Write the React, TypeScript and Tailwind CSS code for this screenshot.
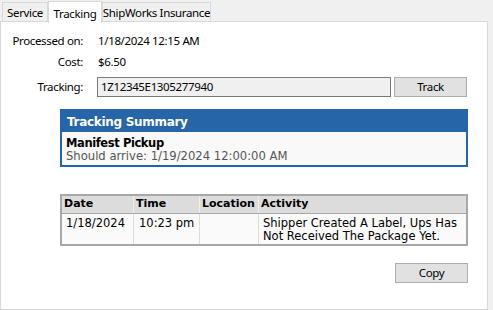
const ui = "font-['Segoe_UI','Noto_Sans',sans-serif] tracking-[-0.35px]";
const verdana = "font-['Verdana','DejaVu_Sans',sans-serif] tracking-normal";

const Tab = ({ label, active, w }: { label: string; active?: boolean; w: string }) => (
  <div
    className={
      active
        ? `${w} h-[22px] bg-white border border-[#d9d9d9] border-b-0 -mb-px z-10 flex items-start justify-center pt-[3px] whitespace-nowrap`
        : `${w} h-[20px] bg-[#f0f0f0] border border-[#d9d9d9] border-b-0 flex items-center justify-center pt-[1px] whitespace-nowrap`
    }
  >
    {label}
  </div>
);

const Button = ({ label }: { label: string }) => (
  <button className="w-[73px] h-[20px] bg-[#e1e1e1] border border-[#adadad] text-[11.5px] text-black leading-none">
    {label}
  </button>
);

export default function App() {
  return (
    <div className={`${ui} text-[11.5px] w-[493px] h-[310px] bg-[#f0f0f0] overflow-hidden text-black`}>
      <div className="flex items-end h-[22px] pl-[2px]">
        <Tab label="Service" w="w-[46px]" />
        <Tab label="Tracking" active w="w-[54px]" />
        <Tab label="ShipWorks Insurance" w="w-[109px]" />
      </div>

      <div className="relative w-[488px] h-[289px] bg-white border border-[#d9d9d9] -mt-px">
        <div className="flex items-center h-[20px] mt-[9px]">
          <div className="w-[82px] text-right">Processed on:</div>
          <div className="ml-[15px]">1/18/2024 12:15 AM</div>
        </div>
        <div className="flex items-center h-[20px] mt-[1px]">
          <div className="w-[82px] text-right">Cost:</div>
          <div className="ml-[15px]">$6.50</div>
        </div>
        <div className="flex items-center h-[20px] mt-[5px]">
          <div className="w-[82px] text-right">Tracking:</div>
          <div className="ml-[14px] w-[294px] h-[20px] bg-[#f0f0f0] border border-[#7a7a7a] flex items-center pl-[3px]">
            1Z12345E1305277940
          </div>
          <div className="ml-[3px]">
            <Button label="Track" />
          </div>
        </div>

        <div className={`${verdana} ml-[59px] mt-[12px] w-[408px] border-2 border-[#2565a8]`}>
          <div className="h-[21px] bg-[#2565a8] text-white font-bold text-[12px] tracking-[-0.3px] flex items-center pl-[5px]">
            Tracking Summary
          </div>
          <div className="bg-[#f9f9f9] pl-[4px] pt-[5px] pb-[2px]">
            <div className="font-bold text-[11.5px] tracking-[-0.4px] leading-[13px]">Manifest Pickup</div>
            <div className="text-[11.6px] leading-[13px] text-[#555555]">Should arrive: 1/19/2024 12:00:00 AM</div>
          </div>
        </div>

        <div className={`${verdana} text-[11.5px] ml-[59px] mt-[27px] w-[408px] border-2 border-[#a8a8a8] bg-[#fafafa]`}>
          <div className="grid grid-cols-[71px_66px_59px_1fr] bg-[#dcdcdc] font-bold text-[11px] h-[18px] border-b border-[#a8a8a8]">
            <div className="pl-[2px] flex items-center">Date</div>
            <div className="pl-[2px] flex items-center border-l border-[#f0f0f0]">Time</div>
            <div className="pl-[2px] flex items-center border-l border-[#f0f0f0]">Location</div>
            <div className="pl-[2px] flex items-center border-l border-[#f0f0f0]">Activity</div>
          </div>
          <div className="grid grid-cols-[71px_66px_59px_1fr] leading-[13px]">
            <div className="pl-[4px] pt-[3px]">1/18/2024</div>
            <div className="pl-[5px] pt-[3px] border-l border-[#dcdcdc]">10:23 pm</div>
            <div className="border-l border-[#dcdcdc]"></div>
            <div className="pl-[4px] pt-[3px] pb-[1px] border-l border-[#dcdcdc]">
              Shipper Created A Label, Ups Has
              <br />
              Not Received The Package Yet.
            </div>
          </div>
        </div>

        <div className="flex justify-end w-[467px] mt-[17px]">
          <Button label="Copy" />
        </div>
      </div>
    </div>
  );
}
